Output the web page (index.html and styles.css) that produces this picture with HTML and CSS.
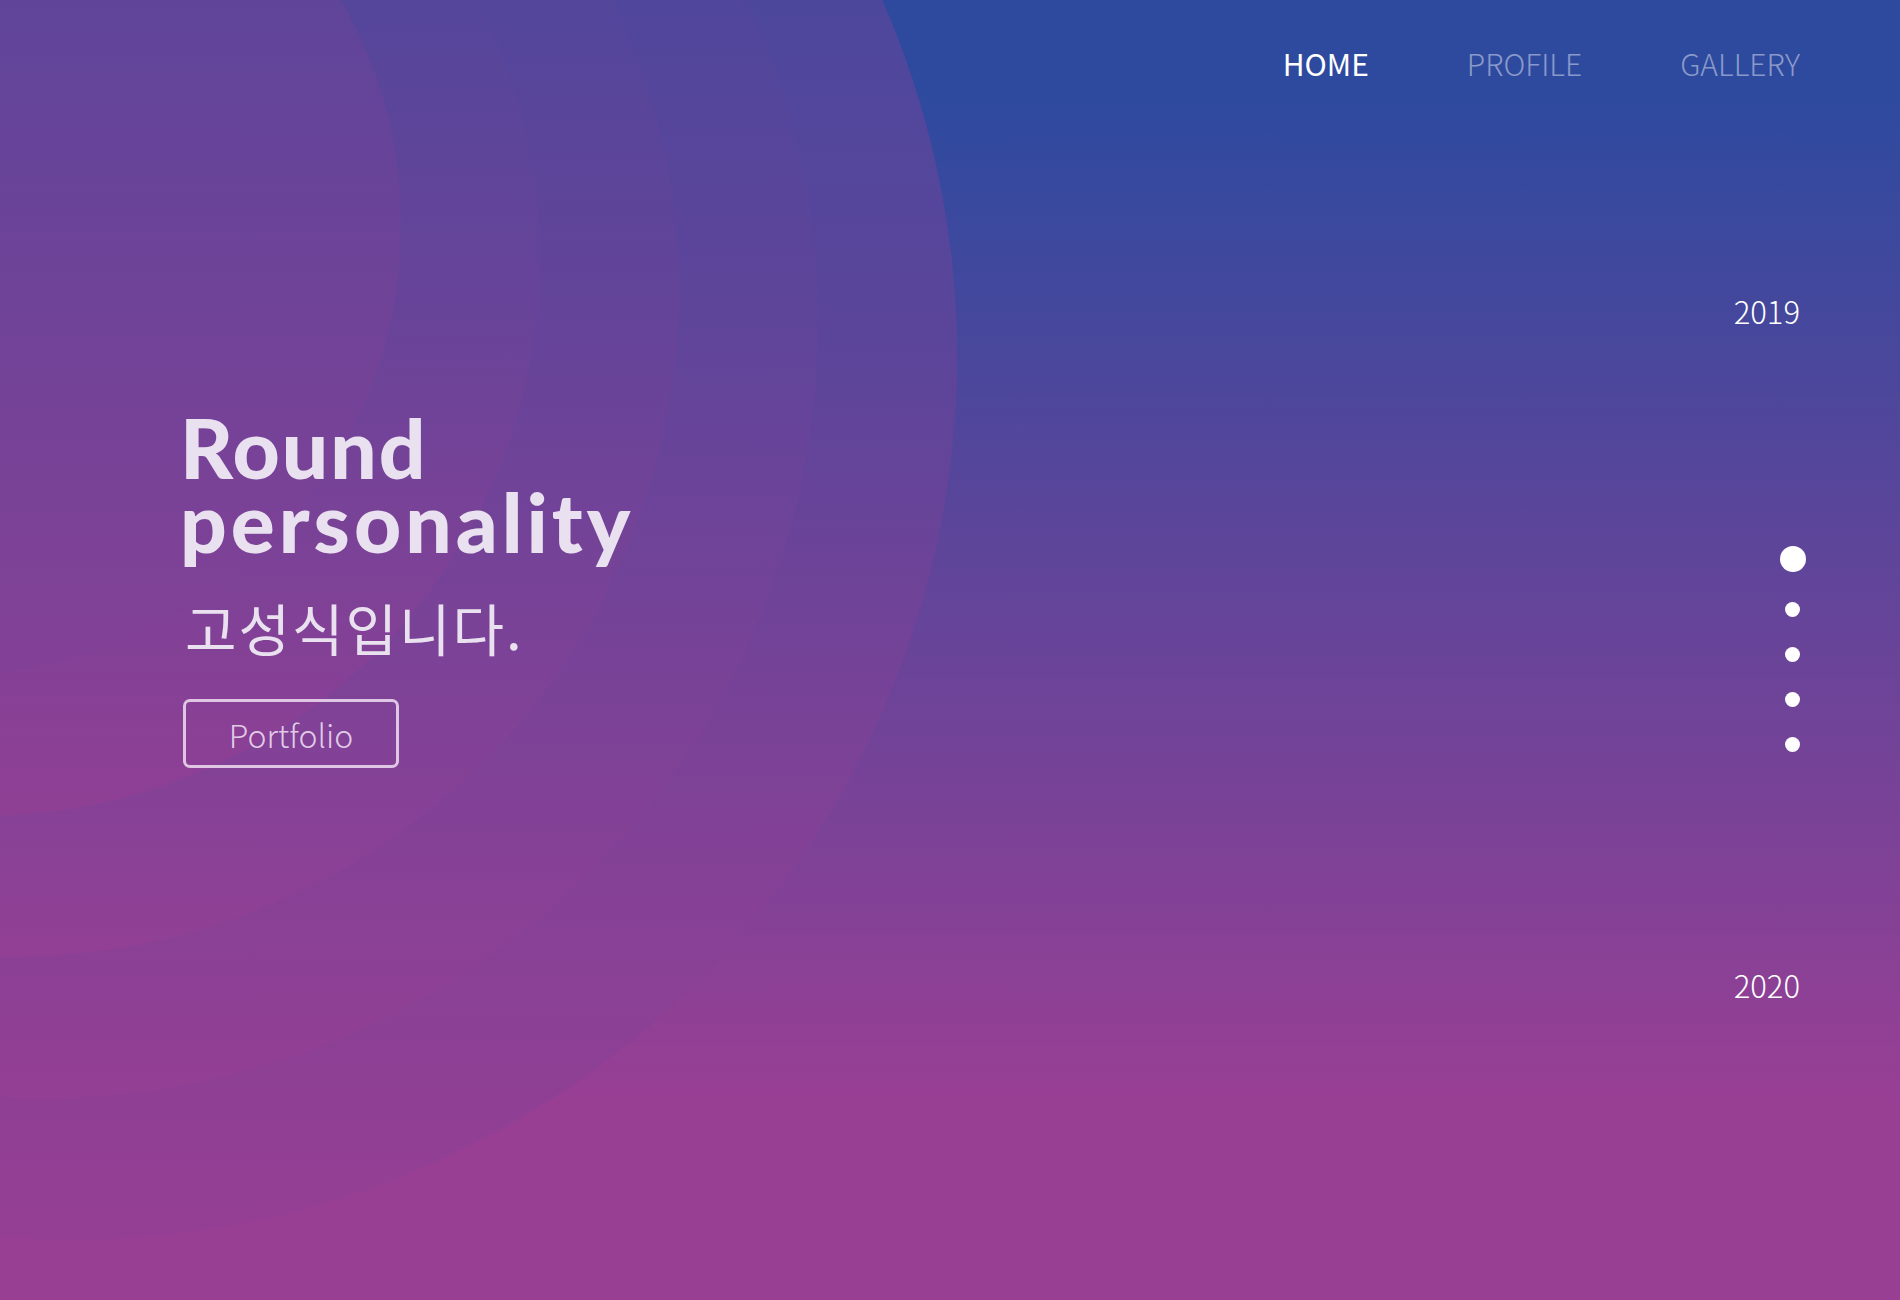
FILE: index.html
```html
<!DOCTYPE html>
<html lang="ko">
<head>
<meta charset="utf-8">
<title>Round personality</title>
<link rel="stylesheet" href="styles.css">
</head>
<body>
<div class="page">
  <div class="backdrop" aria-hidden="true">
    <div class="ring ring-5"></div>
    <div class="ring ring-4"></div>
    <div class="ring ring-3"></div>
    <div class="ring ring-2"></div>
    <div class="ring ring-1"></div>
  </div>
  <header class="nav">
    <a class="nav-link active" href="#">HOME</a>
    <a class="nav-link" href="#">PROFILE</a>
    <a class="nav-link" href="#">GALLERY</a>
  </header>
  <main class="hero">
    <section class="intro">
      <h1 class="title"><span class="title-line first">Round</span><span class="title-line second">personality</span></h1>
      <p class="name">고성식입니다.</p>
      <a class="btn" href="#">Portfolio</a>
    </section>
    <aside class="timeline">
      <span class="year">2019</span>
      <ul class="dots">
        <li class="dot big"></li>
        <li class="dot"></li>
        <li class="dot"></li>
        <li class="dot"></li>
        <li class="dot"></li>
      </ul>
      <span class="year year-last">2020</span>
    </aside>
  </main>
</div>
</body>
</html>
```
FILE: styles.css
```css
html, body {
  margin: 0;
  padding: 0;
}
body {
  width: 1900px;
  height: 1300px;
  overflow: hidden;
  font-family: "Noto Sans CJK KR", "Noto Sans", sans-serif;
}
.page {
  position: relative;
  height: 1300px;
  display: flex;
  flex-direction: column;
  color: #fff;
  overflow: hidden;
  background: linear-gradient(to bottom, #2e4a9f 100px, #983f94 1100px);
}

/* decorative circles behind the content */
.backdrop {
  position: absolute;
  inset: 0;
  overflow: hidden;
  z-index: 0;
}
.ring {
  position: absolute;
  border-radius: 50%;
}
.ring-5 {
  left: -811px; top: -528px; width: 1768px; height: 1768px;
  background: linear-gradient(to bottom, #3a499e 0, #4f479c 578px, #5c459a 891px, #834196 1378px, #953f94 1758px);
}
.ring-4 {
  left: -732px; top: -452px; width: 1550px; height: 1550px;
  background: linear-gradient(to bottom, #3a499e 0, #51469b 482px, #5f459a 775px, #854196 1302px, #933f94 1550px);
}
.ring-3 {
  left: -655px; top: -377px; width: 1334px; height: 1334px;
  background: linear-gradient(to bottom, #3d489d 0, #5b459a 527px, #634499 677px, #894196 1227px, #924095 1334px);
}
.ring-2 {
  left: -576px; top: -300px; width: 1116px; height: 1116px;
  background: linear-gradient(to bottom, #41489d 0, #5e459a 450px, #674499 600px, #8b4095 1050px, #8f4095 1116px);
}
.ring-1 {
  left: -499px; top: -225px; width: 900px; height: 900px;
  background: linear-gradient(to bottom, #53469b 0, #834196 100%);
}

.nav, .hero {
  position: relative;
  z-index: 1;
}
.nav {
  display: flex;
  justify-content: flex-end;
  gap: 98px;
  padding: 43px 100px 0 0;
  height: 40px;
}
.nav-link {
  font-size: 30px;
  line-height: 40px;
  color: rgba(255,255,255,.45);
  text-decoration: none;
  font-weight: 300;
}
.nav-link.active {
  color: #fff;
  font-weight: 400;
}
.hero {
  flex: 1;
  display: grid;
  grid-template-columns: 1fr auto;
}
.intro {
  padding: 327px 0 0 180px;
  display: flex;
  flex-direction: column;
  align-items: flex-start;
}
.title {
  margin: 0;
  font-family: "Lato", sans-serif;
  font-weight: 900;
  font-size: 82px;
  line-height: 74px;
  color: #e9e1ef;
}
.title-line {
  display: block;
}
.title-line.first {
  letter-spacing: 2px;
}
.title-line.second {
  letter-spacing: 4px;
}
.name {
  margin: 39px 0 0 5px;
  font-size: 56px;
  line-height: 60px;
  color: #e9e1ef;
  letter-spacing: 2px;
}
.btn {
  margin: 42px 0 0 3px;
  box-sizing: border-box;
  width: 216px;
  height: 69px;
  border: 3px solid rgba(238,222,242,.85);
  border-radius: 7px;
  display: flex;
  align-items: center;
  justify-content: center;
  font-size: 32px;
  font-weight: 300;
  color: rgba(238,222,242,.9);
  text-decoration: none;
}
.timeline {
  padding: 208px 100px 0 0;
  display: flex;
  flex-direction: column;
  align-items: flex-end;
}
.year {
  font-size: 31px;
  line-height: 40px;
  font-weight: 300;
}
.dots {
  list-style: none;
  margin: 215px 0 0;
  padding: 0;
  width: 15px;
  display: flex;
  flex-direction: column;
  align-items: center;
  gap: 30px;
}
.dot {
  width: 15px;
  height: 15px;
  border-radius: 50%;
  background: #fff;
  flex: none;
}
.dot.big {
  width: 26px;
  height: 26px;
}
.year-last {
  margin-top: 213px;
}
```
